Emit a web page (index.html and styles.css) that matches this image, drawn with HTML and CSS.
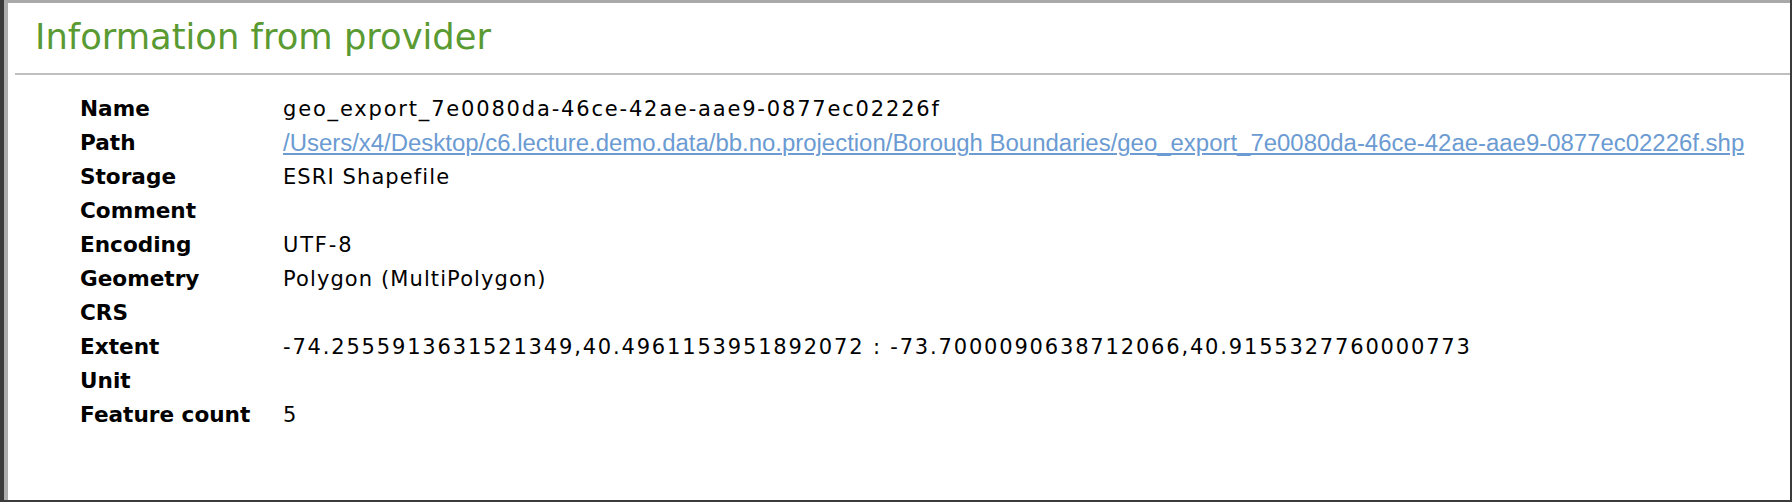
FILE: index.html
```html
<!DOCTYPE html>
<html lang="en">
<head>
<meta charset="utf-8">
<title>Information from provider</title>
<link rel="stylesheet" href="styles.css">
</head>
<body>
<div class="frame">
  <div class="panel">
    <h1 class="title">Information from provider</h1>
    <hr class="rule">
    <dl class="info">
      <dt>Name</dt>
      <dd class="num">geo_export_7e0080da-46ce-42ae-aae9-0877ec02226f</dd>
      <dt>Path</dt>
      <dd><a class="link" href="#">/Users/x4/Desktop/c6.lecture.demo.data/bb.no.projection/Borough Boundaries/geo_export_7e0080da-46ce-42ae-aae9-0877ec02226f.shp</a></dd>
      <dt>Storage</dt>
      <dd>ESRI Shapefile</dd>
      <dt>Comment</dt>
      <dd></dd>
      <dt>Encoding</dt>
      <dd class="num">UTF-8</dd>
      <dt>Geometry</dt>
      <dd>Polygon (MultiPolygon)</dd>
      <dt>CRS</dt>
      <dd></dd>
      <dt>Extent</dt>
      <dd class="num">-74.2555913631521349,40.4961153951892072 : -73.7000090638712066,40.9155327760000773</dd>
      <dt>Unit</dt>
      <dd></dd>
      <dt>Feature count</dt>
      <dd class="num">5</dd>
    </dl>
  </div>
</div>
</body>
</html>
```

FILE: styles.css
```css
html, body {
  margin: 0;
  padding: 0;
  height: 100%;
  background: #ffffff;
}

.frame {
  box-sizing: border-box;
  height: 502px;
  border-left: 4px solid #3b3b3b;
  border-right: 2px solid #3b3b3b;
  border-bottom: 2px solid #3b3b3b;
}

.panel {
  box-sizing: border-box;
  height: 100%;
  border-top: 3px solid #a9a9a9;
  border-left: 4px solid #adadad;
  background: #ffffff;
}

.title {
  margin: 0;
  padding: 15px 0 0 27px;
  font-family: "DejaVu Sans", sans-serif;
  font-weight: 400;
  font-size: 35.3px;
  line-height: 38px;
  color: #5a9a32;
}

.rule {
  margin: 17px 0 0 7px;
  border: 0;
  height: 2px;
  background: #bfbfbf;
}

.info {
  display: grid;
  grid-template-columns: 203px 1fr;
  grid-auto-rows: 34px;
  margin: 17px 0 0 72px;
  font-family: "DejaVu Sans", sans-serif;
  font-size: 21px;
  line-height: 34px;
  color: #000000;
}

.info dt {
  font-weight: 700;
  font-size: 21.6px;
  white-space: nowrap;
}

.info dd {
  margin: 0;
  white-space: nowrap;
  letter-spacing: 1.1px;
}

.info dd.num {
  letter-spacing: 1.82px;
}

.link {
  font-family: "Liberation Sans", Arial, sans-serif;
  font-size: 23.95px;
  letter-spacing: 0;
  color: #6b9bd2;
  text-decoration: underline;
  text-decoration-thickness: 2px;
  text-underline-offset: 2px;
}
```
